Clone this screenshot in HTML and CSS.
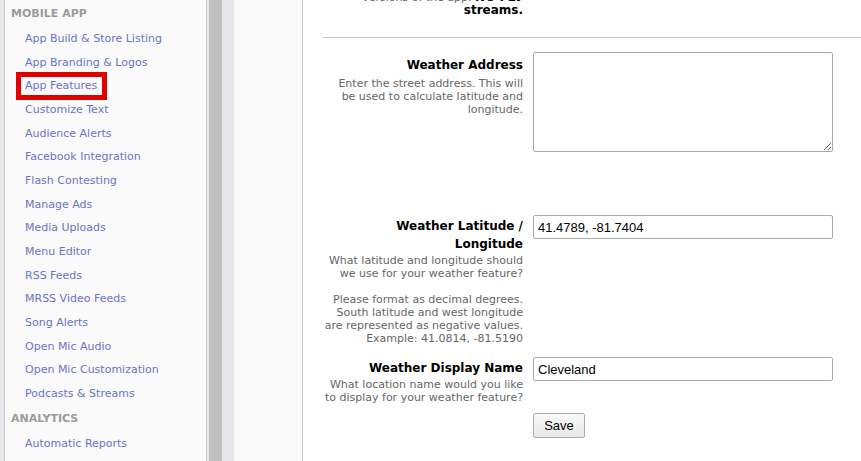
FILE: index.html
```html
<!DOCTYPE html>
<html lang="en">
<head>
    <meta charset="UTF-8">
    <title>App Features</title>
    <link rel="stylesheet" href="styles.css">
</head>
<body>
<div class="page">

    <!-- left navigation -->
    <nav class="sidebar">
        <div class="nav-head">MOBILE APP</div>
        <a class="nav-link" href="#">App Build &amp; Store Listing</a>
        <a class="nav-link" href="#">App Branding &amp; Logos</a>
        <a class="nav-link current" href="#"><span>App Features</span></a>
        <a class="nav-link" href="#">Customize Text</a>
        <a class="nav-link" href="#">Audience Alerts</a>
        <a class="nav-link" href="#">Facebook Integration</a>
        <a class="nav-link" href="#">Flash Contesting</a>
        <a class="nav-link" href="#">Manage Ads</a>
        <a class="nav-link" href="#">Media Uploads</a>
        <a class="nav-link" href="#">Menu Editor</a>
        <a class="nav-link" href="#">RSS Feeds</a>
        <a class="nav-link" href="#">MRSS Video Feeds</a>
        <a class="nav-link" href="#">Song Alerts</a>
        <a class="nav-link" href="#">Open Mic Audio</a>
        <a class="nav-link" href="#">Open Mic Customization</a>
        <a class="nav-link" href="#">Podcasts &amp; Streams</a>
        <div class="nav-head">ANALYTICS</div>
        <a class="nav-link" href="#">Automatic Reports</a>
    </nav>

    <div class="divider"></div>
    <div class="strip"></div>

    <!-- settings form -->
    <main class="content">
        <form class="panel">
            <div class="row intro">
                <div class="label-col">
                    <div class="desc">versions of the app. <b>NO FLV</b><br><b>streams.</b></div>
                </div>
            </div>

            <hr class="sep">

            <div class="row row-address">
                <div class="label-col">
                    <label class="label" for="weatherAddress">Weather Address</label>
                    <div class="desc">Enter the street address. This will<br>be used to calculate latitude and<br>longitude.</div>
                </div>
                <div class="field-col">
                    <textarea id="weatherAddress" class="area"></textarea>
                </div>
            </div>

            <div class="row row-latlng">
                <div class="label-col">
                    <label class="label" for="weatherLatLng">Weather Latitude /<br>Longitude</label>
                    <div class="desc">What latitude and longitude should<br>we use for your weather feature?<br><br>Please format as decimal degrees.<br>South latitude and west longitude<br>are represented as negative values.<br>Example: 41.0814, -81.5190</div>
                </div>
                <div class="field-col">
                    <input id="weatherLatLng" class="text" type="text" value="41.4789, -81.7404">
                </div>
            </div>

            <div class="row row-display">
                <div class="label-col">
                    <label class="label" for="weatherName">Weather Display Name</label>
                    <div class="desc">What location name would you like<br>to display for your weather feature?</div>
                </div>
                <div class="field-col">
                    <input id="weatherName" class="text" type="text" value="Cleveland">
                </div>
            </div>

            <div class="row">
                <div class="label-col"></div>
                <div class="field-col">
                    <button class="button" type="button">Save</button>
                </div>
            </div>
        </form>
    </main>

</div>
</body>
</html>
```

FILE: styles.css
```css
html, body {
    margin: 0;
    height: 100%;
    overflow: hidden;
}
body {
    font-family: "DejaVu Sans", Verdana, sans-serif;
    font-size: 11px;
    background-color: #e8e8ec;
}
.page {
    display: flex;
    align-items: stretch;
    min-height: 100%;
}

/* sidebar */
.sidebar {
    flex-shrink: 0;
    width: 201px;
    margin-left: 4px;
    padding-top: 1px;
    background-color: #fafafa;
    border-left: 1px solid #c8c8c8;
    border-right: 1px solid #c8c8c8;
}
.nav-head {
    padding-left: 6px;
    line-height: 26px;
    font-weight: bold;
    color: #9a9a9a;
}
.nav-link {
    display: block;
    padding-left: 20px;
    line-height: 23.67px;
    color: #6b73c6;
    text-decoration: none;
}
.nav-link.current span {
    position: relative;
    display: inline-block;
}
.nav-link.current span::after {
    content: "";
    position: absolute;
    left: -9px;
    right: -10px;
    top: -2px;
    bottom: -2px;
    border: 5px solid #e10000;
}

.divider {
    flex-shrink: 0;
    width: 13px;
    margin-left: 2px;
    background-color: #c0c0c0;
}
.strip {
    flex-shrink: 0;
    width: 12px;
    background-color: #e6e7ec;
}

/* main form */
.content {
    flex: 1;
    background-color: #fafafa;
    padding-left: 68px;
    padding-bottom: 1px;
}
.panel {
    width: 540px;
    margin-top: -10px;
    padding: 0 20px 21px;
    background-color: #fff;
    border: 1px solid #c8c8c8;
}
.row {
    display: flex;
    gap: 10px;
    margin-bottom: 13px;
}
.row-address {
    margin-bottom: 63px;
}
.row-latlng {
    margin-bottom: 12px;
}
.row-display {
    margin-bottom: 9px;
}
.intro {
    margin-bottom: 20px;
}
.label-col {
    width: 200px;
    flex-shrink: 0;
    padding-top: 2px;
    text-align: right;
}
.intro .label-col {
    padding-top: 0;
}
.row-address .label-col {
    padding-top: 4px;
}
.label {
    display: block;
    font-size: 12px;
    font-weight: bold;
    line-height: 18px;
    color: #000;
}
.desc {
    margin-top: 1px;
    line-height: 13px;
    color: #666;
}
.intro .desc {
    margin-top: 0;
}
.row-address .desc {
    margin-top: 3px;
}
.desc b {
    color: #000;
    font-size: 12px;
}
.sep {
    margin: 0 0 14px;
    border: 0;
    border-top: 1px solid #c8c8c8;
}

.area,
.text {
    box-sizing: border-box;
    width: 300px;
    margin: 0;
    border: 1px solid #a9a9a9;
    border-radius: 2px;
    font-family: "Liberation Sans", Arial, sans-serif;
    font-size: 13px;
    color: #000;
}
.area {
    display: block;
    height: 100px;
}
.text {
    display: block;
    height: 24px;
    padding: 0 4px;
}
.button {
    width: 52px;
    height: 25px;
    margin: 0;
    font-family: "Liberation Sans", Arial, sans-serif;
    font-size: 13px;
    color: #000;
    background: linear-gradient(#f8f8f8, #e8e8e8);
    border: 1px solid #adadad;
    border-radius: 2px;
}
```
